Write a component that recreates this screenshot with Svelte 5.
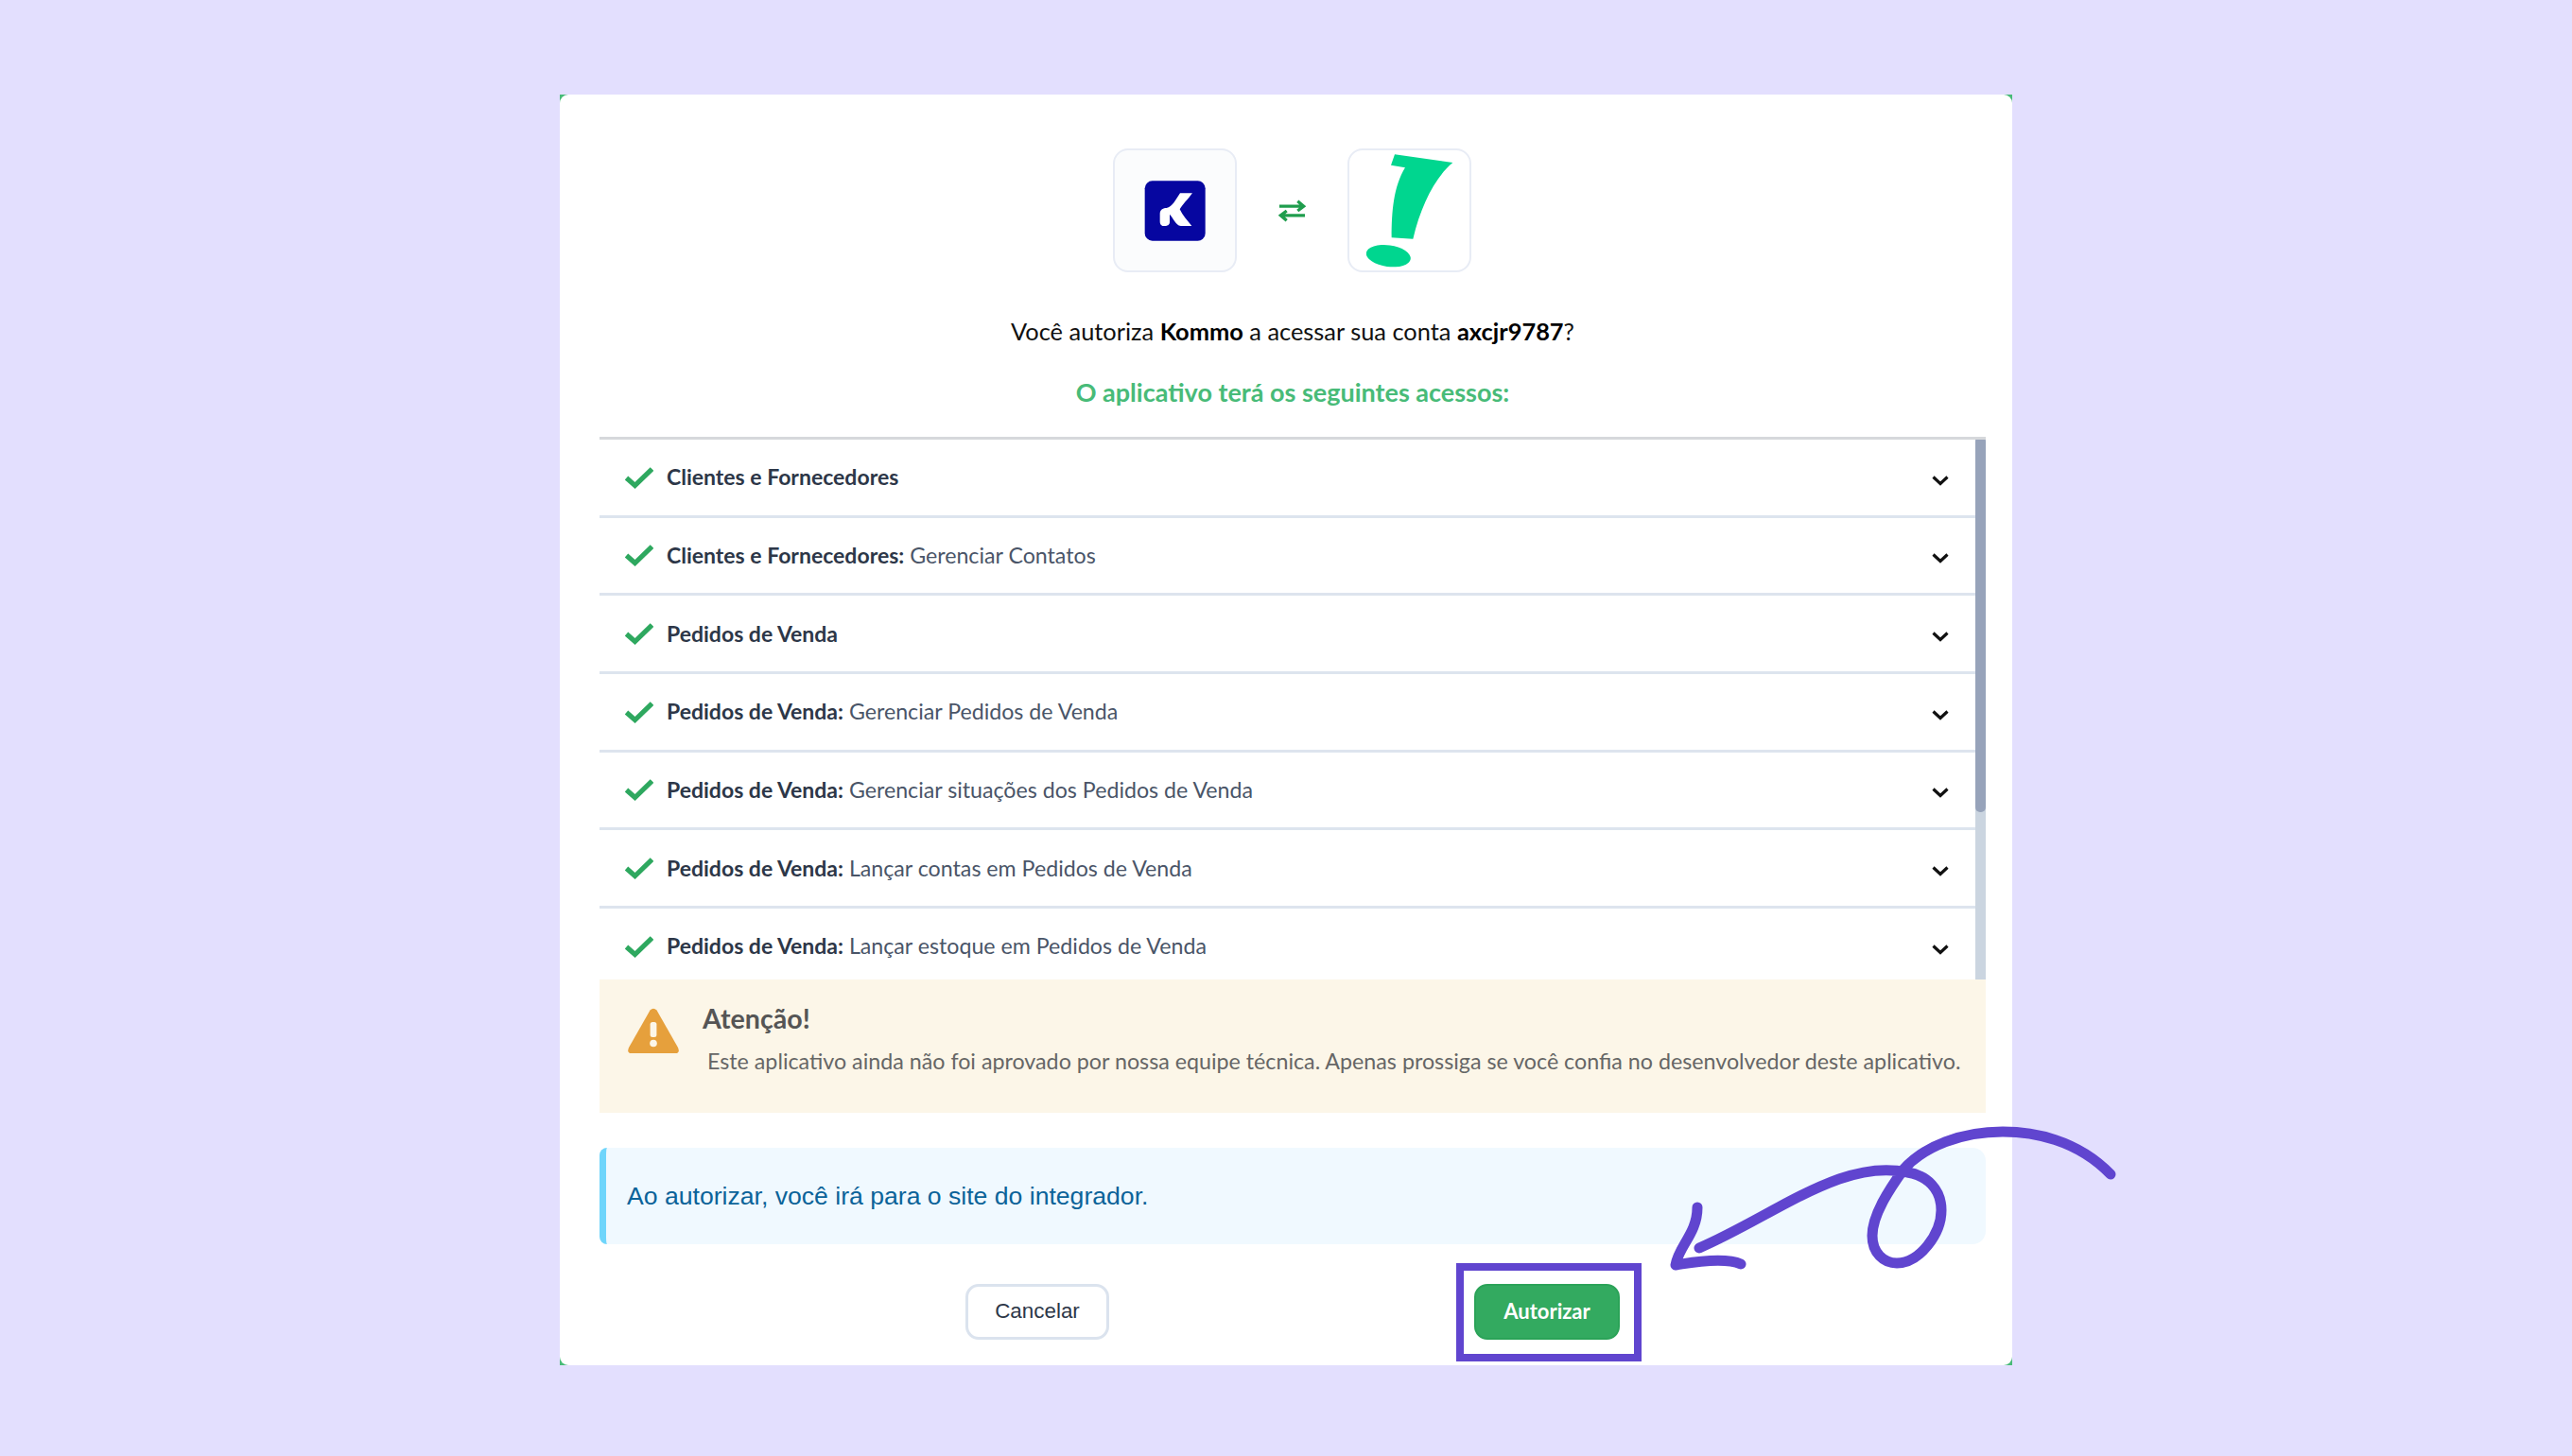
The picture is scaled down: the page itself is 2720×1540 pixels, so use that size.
<script>
  const rows = [
    { bold: 'Clientes e Fornecedores', text: '' },
    { bold: 'Clientes e Fornecedores:', text: 'Gerenciar Contatos' },
    { bold: 'Pedidos de Venda', text: '' },
    { bold: 'Pedidos de Venda:', text: 'Gerenciar Pedidos de Venda' },
    { bold: 'Pedidos de Venda:', text: 'Gerenciar situações dos Pedidos de Venda' },
    { bold: 'Pedidos de Venda:', text: 'Lançar contas em Pedidos de Venda' },
    { bold: 'Pedidos de Venda:', text: 'Lançar estoque em Pedidos de Venda' }
  ];
</script>

<div class="page">
  <div class="card">
    <div class="inner">
      <div class="logos">
        <div class="logo soft">
          <svg viewBox="235 82 390 390" width="130" height="130">
            <rect x="333" y="182" width="192" height="190" rx="24" fill="#0606a0" />
            <path fill="#fff" d="M445 221 L484 221 C470 240 452 258 444 272 C452 290 468 308 482 325 L447 325 C430 322 424 300 412 288 L412 312 C412 322 405 325 392 325 C384 325 381 318 381 310 L381 285 C382 272 392 268 402 268 C420 266 432 240 445 221Z" />
          </svg>
        </div>
        <svg class="swap" viewBox="0 0 30 24" width="30" height="24" fill="none" stroke="#1f9d4d" stroke-width="3.4">
          <path d="M1 7 H27 M21 1.5 L27.5 7 L21 12" />
          <path d="M29 17 H3 M9 12 L2.5 17 L9 22.5" />
        </svg>
        <div class="logo">
          <svg viewBox="975 82 390 390" width="130" height="130" fill="#00d68f">
            <path d="M1122 98 L1306 124 C1250 170 1205 260 1180 366 L1112 362 C1112 280 1118 200 1155 140 L1110 132 Z" />
            <ellipse cx="1102" cy="420" rx="71" ry="34" transform="rotate(8 1102 420)" />
          </svg>
        </div>
      </div>

      <p class="ask">Você autoriza <b>Kommo</b> a acessar sua conta <b>axcjr9787</b>?</p>
      <h2 class="heading">O aplicativo terá os seguintes acessos:</h2>

      <div class="list">
        <div class="rows">
          {#each rows as row}
            <div class="row">
              <svg class="check" viewBox="0 0 30 23" width="30" height="23" fill="none" stroke="#2ea85f" stroke-width="5.2">
                <path d="M1.5 11.5 L10.5 19.5 L28.5 2" />
              </svg>
              <span class="label"><b>{row.bold}</b>{#if row.text}{' '}{row.text}{/if}</span>
              <svg class="chev" viewBox="0 0 18 11" width="18" height="11" fill="none" stroke="#111" stroke-width="3.2">
                <path d="M1.5 1.5 L9 8.5 L16.5 1.5" />
              </svg>
            </div>
          {/each}
        </div>
        <div class="track"><div class="thumb"></div></div>
      </div>

      <div class="warn">
        <svg class="tri" viewBox="0 0 54 48" width="54" height="48">
          <path fill="#e6a03c" d="M23.5 2.5 Q27 -1 30.5 2.5 L53 42 Q55.5 48 50 48 L4 48 Q-1.5 48 1 42 Z" />
          <rect x="23.6" y="15" width="6.8" height="16" rx="2.5" fill="#fcf6e8" />
          <circle cx="27" cy="37.5" r="3.8" fill="#fcf6e8" />
        </svg>
        <div class="warn-body">
          <div class="warn-title">Atenção!</div>
          <div class="warn-text">Este aplicativo ainda não foi aprovado por nossa equipe técnica. Apenas prossiga se você confia no desenvolvedor deste aplicativo.</div>
        </div>
      </div>

      <div class="info">Ao autorizar, você irá para o site do integrador.</div>

      <div class="actions">
        <button class="btn cancel">Cancelar</button>
        <div class="auth-wrap">
          <button class="btn auth">Autorizar</button>
          <span class="frame"></span>
        </div>
      </div>
    </div>
  </div>

  <svg class="scribble" viewBox="1720 1150 540 310" width="540" height="310" fill="none" stroke="#6045cf" stroke-width="11" stroke-linecap="round" stroke-linejoin="round">
    <path d="M2232 1242 C2196 1205 2150 1197 2118 1197 C2075 1197 2035 1212 2013 1237 C1998 1258 1980 1285 1980 1307 C1980 1325 1992 1336 2006 1336 C2030 1336 2053 1305 2053 1280 C2053 1258 2038 1243 2017 1240 C1990 1234 1965 1240 1945 1247 C1895 1265 1850 1297 1797 1320" />
    <path d="M1795 1277 C1795 1305 1775 1318 1772 1338 C1795 1334 1825 1330 1841 1337" />
  </svg>
</div>

<style>
  :global(body) {
    margin: 0;
    background: #e3dffe;
  }
  .page {
    position: relative;
    width: 2720px;
    height: 1540px;
    padding-top: 100px;
    box-sizing: border-box;
    font-family: "Lato", "Liberation Sans", sans-serif;
    overflow: hidden;
  }
  .card {
    width: 1536px;
    height: 1344px;
    margin-left: 592px;
    background: #48bb78;
  }
  .inner {
    height: 100%;
    box-sizing: border-box;
    background: #fff;
    border-radius: 9px;
    padding: 57px 28px 0 42px;
  }
  .logos {
    display: flex;
    justify-content: center;
    align-items: center;
    gap: 44px;
    margin-right: 1px;
  }
  .logo {
    width: 131px;
    height: 131px;
    box-sizing: border-box;
    border: 2px solid #e8ecf5;
    border-radius: 16px;
    background: #fff;
    overflow: hidden;
  }
  .logo.soft {
    background: #fbfcfd;
  }
  .logo svg {
    display: block;
    margin: -1.5px;
  }
  .swap {
    flex: none;
    width: 29px;
  }
  .ask {
    margin: 46px 0 0;
    text-align: center;
    font-size: 25.4px;
    line-height: 32px;
    color: #111;
  }
  .ask b {
    font-weight: 700;
    color: #000;
  }
  .heading {
    margin: 33px 0 0;
    text-align: center;
    font-size: 27px;
    line-height: 32px;
    font-weight: 700;
    color: #48bb78;
  }
  .list {
    display: flex;
    margin-top: 31px;
    height: 574px;
    box-sizing: border-box;
    overflow: hidden;
    border-top: 3px solid #d6d8db;
  }
  .rows {
    flex: 1;
    min-width: 0;
  }
  .track {
    flex: none;
    width: 11px;
    margin-top: -3px;
    background: #cbd5e0;
  }
  .thumb {
    height: 397px;
    background: #97a3ba;
    border-radius: 5px;
  }
  .row {
    display: flex;
    align-items: center;
    height: 82.67px;
    box-sizing: border-box;
    border-bottom: 3px solid #dde4ee;
    padding: 0 28px 0 27px;
  }
  .check {
    flex: none;
    margin-right: 14px;
    margin-top: 1px;
  }
  .chev {
    flex: none;
    margin-left: auto;
    margin-top: 7px;
  }
  .label {
    font-size: 23.2px;
    color: #4a5568;
    line-height: 30px;
    margin-top: -1px;
  }
  .label b {
    font-size: 23px;
    font-weight: 700;
    color: #2d3748;
  }
  .warn {
    display: flex;
    align-items: flex-start;
    height: 141px;
    box-sizing: border-box;
    padding: 30px 0 0 30px;
    background: #fcf6e8;
  }
  .tri {
    flex: none;
    margin-right: 25px;
  }
  .warn-title {
    margin-top: -7px;
    font-size: 28.6px;
    line-height: 36px;
    font-weight: 700;
    color: #555;
  }
  .warn-text {
    margin: 12px 0 0 5px;
    font-size: 23.25px;
    line-height: 30px;
    color: #666;
    white-space: nowrap;
  }
  .info {
    display: flex;
    align-items: center;
    margin-top: 37px;
    height: 102px;
    box-sizing: border-box;
    padding-left: 22px;
    background: #f0f9ff;
    border-left: 7px solid #6fd5fb;
    border-radius: 8px 14px 14px 8px;
    font-family: "Liberation Sans", Arial, sans-serif;
    font-size: 26.6px;
    color: #0b6399;
  }
  .actions {
    display: flex;
    justify-content: center;
    gap: 386px;
    margin-top: 42px;
  }
  .auth-wrap {
    position: relative;
  }
  .btn {
    display: block;
    height: 59px;
    box-sizing: border-box;
    border-radius: 14px;
    padding: 0 0 2px;
  }
  .cancel {
    width: 152px;
    background: #fff;
    border: 3px solid #dbe3ee;
    color: #2d3748;
    font-family: "Liberation Sans", Arial, sans-serif;
    font-size: 22.4px;
  }
  .auth {
    width: 154px;
    background: #33aa60;
    border: 2px solid #2ba358;
    color: #fff;
    font-family: "Lato", sans-serif;
    font-weight: 700;
    font-size: 22px;
  }
  .frame {
    position: absolute;
    left: -19px;
    top: -22px;
    right: -23px;
    bottom: -23px;
    border: 8px solid #6045cf;
    pointer-events: none;
  }
  .scribble {
    position: absolute;
    left: 1720px;
    top: 1150px;
    pointer-events: none;
  }
</style>
